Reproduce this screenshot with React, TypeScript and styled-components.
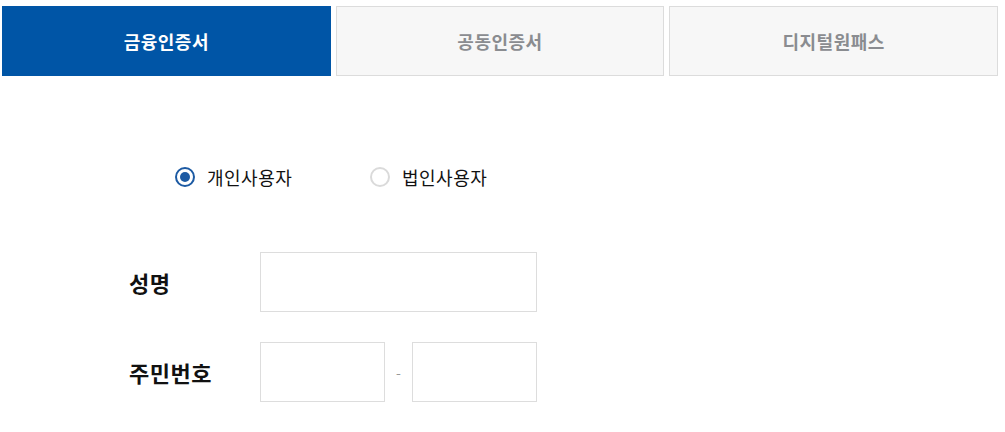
import React, { useState } from "react"
import styled, { createGlobalStyle } from "styled-components"

const GlobalStyle = createGlobalStyle`
  body {
    margin: 0;
    background: #fff;
    font-family: "Noto Sans CJK KR", "Noto Sans", sans-serif;
  }
`

const Page = styled.div`
  width: 1005px;
  height: 432px;
  padding: 6px 7px 0 2px;
  box-sizing: border-box;
`

const Tabs = styled.div`
  display: grid;
  grid-template-columns: repeat(3, 1fr);
  gap: 5px;
`

const Tab = styled.button<{ active?: boolean }>`
  height: 70px;
  margin: 0;
  padding: 0;
  box-sizing: border-box;
  border: 1px solid ${(p) => (p.active ? "#0055a6" : "#dcdcdc")};
  background: ${(p) => (p.active ? "#0055a6" : "#f7f7f7")};
  color: ${(p) => (p.active ? "#fff" : "#8a8c90")};
  font-family: inherit;
  font-size: 18px;
  font-weight: 700;
  letter-spacing: 0.5px;
  cursor: pointer;
`

const Form = styled.div`
  padding: 88px 0 0 124px;
`

const RadioRow = styled.div`
  display: flex;
  padding-left: 49px;
`

const RadioLabel = styled.label`
  display: flex;
  align-items: center;
  width: 195px;
  font-size: 18px;
  color: #111;
  letter-spacing: 0.5px;
  cursor: pointer;
`

const RadioDot = styled.span<{ checked?: boolean }>`
  width: 20px;
  height: 20px;
  margin-right: 12px;
  box-sizing: border-box;
  border-radius: 50%;
  border: 2px solid ${(p) => (p.checked ? "#1c5aa3" : "#dadada")};
  display: flex;
  align-items: center;
  justify-content: center;

  &::after {
    content: "";
    width: 10px;
    height: 10px;
    border-radius: 50%;
    background: ${(p) => (p.checked ? "#1c5aa3" : "transparent")};
  }
`

const Fields = styled.div`
  display: flex;
  flex-direction: column;
  gap: 30px;
  margin-top: 62px;
`

const FieldRow = styled.div`
  display: flex;
  align-items: center;
`

const FieldLabel = styled.div`
  width: 134px;
  padding-left: 3px;
  box-sizing: border-box;
  font-size: 22px;
  font-weight: 700;
  color: #111;
  letter-spacing: 0.5px;
`

const Input = styled.input<{ w: number }>`
  width: ${(p) => p.w}px;
  height: 60px;
  box-sizing: border-box;
  border: 1px solid #dddddd;
  padding: 0 10px;
  font-size: 16px;
  outline: none;
`

const Dash = styled.span`
  width: 27px;
  text-align: center;
  color: #999;
  font-size: 14px;
`

export default function App() {
  const [tab, setTab] = useState(0)
  const [kind, setKind] = useState(0)
  const tabs = ["금융인증서", "공동인증서", "디지털원패스"]
  const kinds = ["개인사용자", "법인사용자"]

  return (
    <Page>
      <GlobalStyle />
      <Tabs>
        {tabs.map((t, i) => (
          <Tab key={t} active={tab === i} onClick={() => setTab(i)}>
            {t}
          </Tab>
        ))}
      </Tabs>
      <Form>
        <RadioRow>
          {kinds.map((k, i) => (
            <RadioLabel key={k} onClick={() => setKind(i)}>
              <RadioDot checked={kind === i} />
              {k}
            </RadioLabel>
          ))}
        </RadioRow>
        <Fields>
          <FieldRow>
            <FieldLabel>성명</FieldLabel>
            <Input w={277} />
          </FieldRow>
          <FieldRow>
            <FieldLabel>주민번호</FieldLabel>
            <Input w={125} />
            <Dash>-</Dash>
            <Input w={125} />
          </FieldRow>
        </Fields>
      </Form>
    </Page>
  )
}
